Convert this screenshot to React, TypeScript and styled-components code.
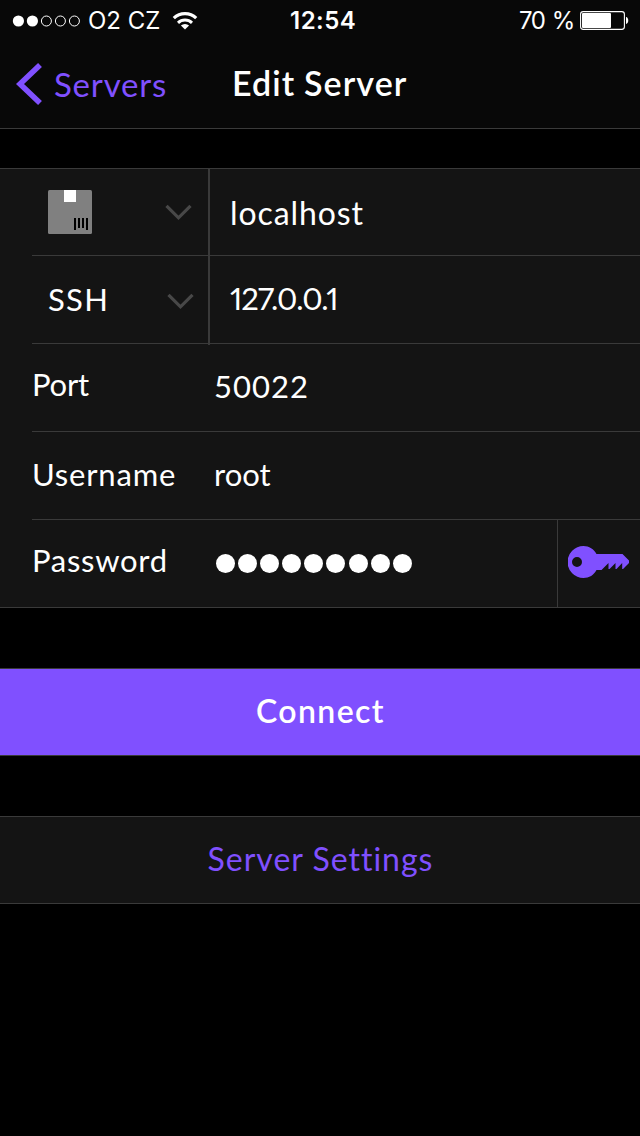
import React from 'react';
import styled, { createGlobalStyle } from 'styled-components';

const purple = '#8050ff';
const line = '#3a3a3a';
const panel = '#141414';

const GlobalStyle = createGlobalStyle`
  html, body { margin: 0; background: #000; }
  * { box-sizing: border-box; }
`;

const Screen = styled.main`
  width: 640px;
  height: 1136px;
  overflow: hidden;
  background: #000;
  color: #fff;
  font-family: Lato, 'Open Sans', sans-serif;
  font-variant-ligatures: none;
`;

const Header = styled.header`
  height: 129px;
  background: #080808;
  border-bottom: 1px solid ${line};
`;

const StatusBar = styled.div`
  display: grid;
  grid-template-columns: 278px auto 1fr;
  height: 40px;
  padding: 0 11px 0 12px;
  align-items: center;
  font-family: Inter, Roboto, sans-serif;
`;

const StatusSide = styled.div<{ $end?: boolean }>`
  display: flex;
  align-items: center;
  justify-content: ${(p) => (p.$end ? 'flex-end' : 'flex-start')};
`;

const StatusText = styled.span<{ $bold?: boolean; $spacing?: number; $wordGap?: number }>`
  font-size: 24px;
  line-height: 40px;
  padding-top: 1px;
  font-weight: ${(p) => (p.$bold ? 600 : 400)};
  letter-spacing: ${(p) => p.$spacing ?? 0}px;
  word-spacing: ${(p) => p.$wordGap ?? 0}px;
  white-space: pre;
`;

const Signal = styled.svg`
  margin-right: 7px;
`;

const Wifi = styled.svg`
  margin-left: 12px;
`;

const Battery = styled.svg`
  margin-left: 6px;
`;

const NavBar = styled.nav`
  display: grid;
  grid-template-columns: 232px 1fr;
  height: 88px;
`;

const BackButton = styled.div`
  display: flex;
  padding-left: 16px;
  gap: 12px;
`;

const BackArrow = styled.svg`
  margin-top: 22px;
`;

interface TextProps {
  $top: number;
  $size?: number;
  $weight?: number;
  $spacing?: number;
  $wordGap?: number;
  $color?: string;
  $narrowDigits?: boolean;
}

const Text = styled.span<TextProps>`
  padding-top: ${(p) => p.$top}px;
  font-size: ${(p) => p.$size ?? 31}px;
  line-height: 40px;
  font-weight: ${(p) => p.$weight ?? 400};
  letter-spacing: ${(p) => p.$spacing ?? 0}px;
  word-spacing: ${(p) => p.$wordGap ?? 0}px;
  font-variant-numeric: ${(p) => (p.$narrowDigits ? 'proportional-nums' : 'normal')};
  color: ${(p) => p.$color ?? '#fff'};
  white-space: pre;
`;

const Form = styled.section`
  margin-top: 39px;
  height: 440px;
  background: ${panel};
  border-top: 1px solid ${line};
  border-bottom: 1px solid ${line};
`;

const Row = styled.div<{ $height?: number; $last?: boolean }>`
  display: flex;
  align-items: flex-start;
  height: ${(p) => p.$height ?? 88}px;
  margin-left: 32px;
  border-bottom: ${(p) => (p.$last ? 'none' : `1px solid ${line}`)};
`;

const Picker = styled.div<{ $end: number; $extend?: number }>`
  display: flex;
  flex: none;
  justify-content: space-between;
  width: 178px;
  height: calc(100% + ${(p) => p.$extend ?? 1}px);
  padding: 0 ${(p) => p.$end}px 0 16px;
  border-right: 2px solid ${line};
`;

const Value = styled.div<{ $inset?: number }>`
  display: flex;
  flex: 1;
  padding-left: ${(p) => p.$inset ?? 0}px;
`;

const FieldName = styled.div`
  display: flex;
  width: 182px;
`;

const PackageIcon = styled.svg`
  margin-top: 21px;
`;

const Chevron = styled.svg<{ $top: number }>`
  margin-top: ${(p) => p.$top}px;
`;

const Dots = styled.div`
  display: flex;
  gap: 3.2px;
  padding: 34.400px 0 0 1.500px;
`;

const Dot = styled.i`
  width: 19px;
  height: 19px;
  border-radius: 50%;
  background: #fff;
`;

const KeyCell = styled.div`
  width: 83px;
  height: 100%;
  padding: 26px 0 0 10px;
  border-left: 1px solid ${line};
`;

const ActionButton = styled.div<{ $primary?: boolean }>`
  display: flex;
  justify-content: center;
  height: 88px;
  margin-top: 60px;
  padding-left: 1px;
  background: ${(p) => (p.$primary ? purple : panel)};
  border-top: 1px solid ${line};
  border-bottom: 1px solid ${line};
`;

const DownChevron = ({ top }: { top: number }) => (
  <Chevron $top={top} width="27" height="17" viewBox="0 0 27 17">
    <path d="M1.5 1.8 13.5 13.8 25.5 1.8" fill="none" stroke="#484848" strokeWidth="3.2" />
  </Chevron>
);

export default function App() {
  return (
    <>
      <GlobalStyle />
      <Screen>
        <Header>
          <StatusBar>
            <StatusSide>
              <Signal width="69" height="12" viewBox="0 0 69 12">
                {[0, 1, 2, 3, 4].map((i) => (
                  <circle
                    key={i}
                    cx={6.4 + i * 14}
                    cy="6"
                    r={i < 2 ? 5.6 : 5}
                    fill={i < 2 ? '#fff' : 'none'}
                    stroke={i < 2 ? 'none' : '#fff'}
                    strokeWidth="1"
                  />
                ))}
              </Signal>
              <StatusText>O2 CZ</StatusText>
              <Wifi width="26" height="19" viewBox="0 0 26 19">
                <path d="M1.8 7.2a16 16 0 0 1 22.4 0" fill="none" stroke="#fff" strokeWidth="3.2" />
                <path d="M6 11.9a10.2 10.2 0 0 1 14 0" fill="none" stroke="#fff" strokeWidth="3" />
                <path d="M13 18.6 8.9 14.6a6 6 0 0 1 8.2 0Z" fill="#fff" />
              </Wifi>
            </StatusSide>
            <StatusText $bold $spacing={0.5}>12:54</StatusText>
            <StatusSide $end>
              <StatusText $spacing={-1.4} $wordGap={2}>70 %</StatusText>
              <Battery width="49" height="19" viewBox="0 0 49 19">
                <rect x="0.6" y="0.6" width="43.8" height="17.8" rx="2.6" fill="none" stroke="#fff" strokeWidth="1.1" />
                <rect x="2" y="2" width="29" height="15" rx="1" fill="#fff" />
                <path d="M46 6c3 .3 3 6.7 0 7Z" fill="#fff" />
              </Battery>
            </StatusSide>
          </StatusBar>
          <NavBar>
            <BackButton>
              <BackArrow width="26" height="44" viewBox="0 0 26 44">
                <path d="M24 3 4 22 24 41" fill="none" stroke={purple} strokeWidth="5.6" />
              </BackArrow>
              <Text $top={24} $size={33} $spacing={0.8} $color={purple}>Servers</Text>
            </BackButton>
            <Text $top={23} $size={34} $weight={600} $spacing={1.1} $wordGap={-1}>Edit Server</Text>
          </NavBar>
        </Header>

        <Form>
          <Row $height={87}>
            <Picker $end={16}>
              <PackageIcon width="44" height="44" viewBox="0 0 44 44">
                <rect width="44" height="44" rx="1.5" fill="#808080" />
                <path d="M16 0h12v12H16Z" fill="#fff" />
                <path d="M26 28h2v12h-2ZM30 28h2v10h-2ZM34 28h2v10h-2ZM38 28h2v12h-2Z" fill="#000" />
              </PackageIcon>
              <DownChevron top={35} />
            </Picker>
            <Value $inset={20}><Text $top={24} $size={32} $spacing={0.9}>localhost</Text></Value>
          </Row>
          <Row>
            <Picker $end={14} $extend={2}>
              <Text $top={23} $spacing={1.3}>SSH</Text>
              <DownChevron top={37} />
            </Picker>
            <Value $inset={20}><Text $top={22} $spacing={-1} $narrowDigits>127.0.0.1</Text></Value>
          </Row>
          <Row>
            <FieldName><Text $top={20} $spacing={-0.2}>Port</Text></FieldName>
            <Value><Text $top={22} $spacing={1}>50022</Text></Value>
          </Row>
          <Row>
            <FieldName><Text $top={22} $spacing={0.8}>Username</Text></FieldName>
            <Value><Text $top={22}>root</Text></Value>
          </Row>
          <Row $height={87} $last>
            <FieldName><Text $top={20} $spacing={0.7}>Password</Text></FieldName>
            <Value>
              <Dots>{Array.from({ length: 9 }, (_, i) => <Dot key={i} />)}</Dots>
            </Value>
            <KeyCell>
              <svg width="62" height="33" viewBox="0 0 62 33">
                <path
                  fill={purple}
                  fillRule="evenodd"
                  d="M15.500 0c5.500 0 10.500 3 13 8h26L61 14.500v2.500L55 23h-.8v-6L48.500 23h-1v-6L41.500 23h-1v-6L33.500 24H28.500c-2.500 5-7.500 8-13 8A16 16 0 0 1 15.500 0ZM9 11a5 5 0 1 0 0 10 5 5 0 0 0 0-10Z"
                />
              </svg>
            </KeyCell>
          </Row>
        </Form>

        <ActionButton $primary><Text $top={22} $size={32} $weight={600} $spacing={1.4}>Connect</Text></ActionButton>
        <ActionButton><Text $top={22} $size={32} $spacing={1} $color={purple}>Server Settings</Text></ActionButton>
      </Screen>
    </>
  );
}
